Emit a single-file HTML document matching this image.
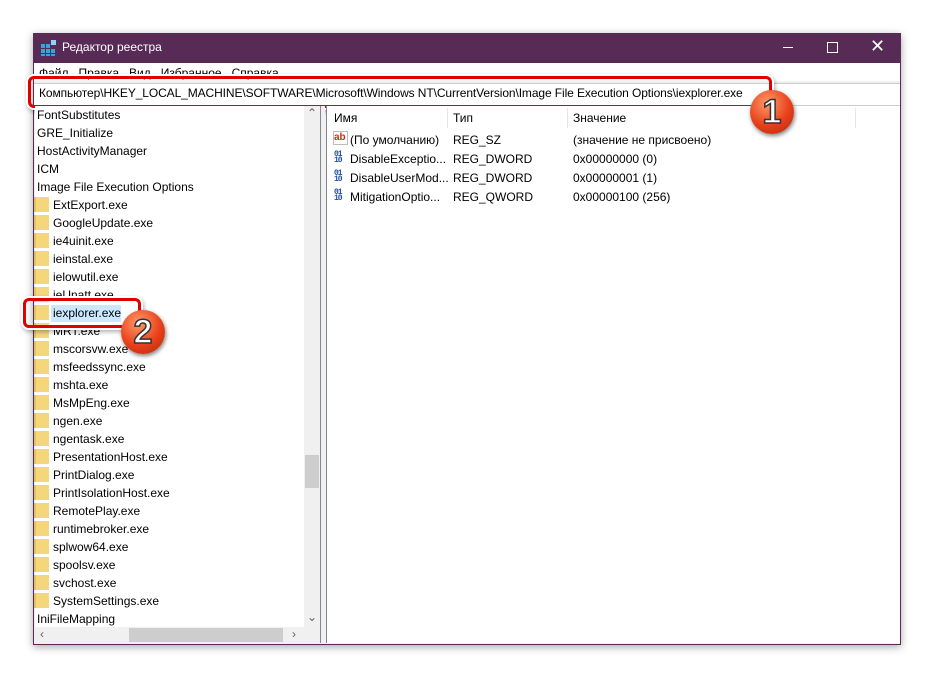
<html><head><style>
body{margin:0;width:934px;height:678px;background:#fff;position:relative;overflow:hidden;font-family:"Liberation Sans",sans-serif;font-size:12px;color:#000}
.a{position:absolute}
.win{left:33px;top:33px;width:868px;height:612px;background:#f0f0f0;box-shadow:0 2px 8px rgba(0,0,0,.35);border:1px solid #582b57;box-sizing:border-box}
.t{white-space:nowrap}
.fold{position:absolute;width:13px;height:15px;background:#f4d77c;border-left:2px solid #e6c35a}
.badge{position:absolute;width:44px;height:44px;border-radius:50%;background:radial-gradient(circle at 40% 30%,#ff9a6a,#e8401a 55%,#b02808);box-shadow:1px 2px 4px rgba(0,0,0,.5);color:#fff;font:bold 34px "Liberation Sans",sans-serif;text-align:center;line-height:44px;-webkit-text-stroke:1.5px #333}
.ri{position:absolute;width:13px;height:13px;font:bold 8px "Liberation Mono",monospace;color:#2050a0;line-height:6px;letter-spacing:-1px}
</style></head><body>
<div class="a win"></div>
<div class="a" style="left:33px;top:33px;width:868px;height:30px;background:#582b57"></div>
<svg class="a" style="left:41px;top:40px" width="16" height="16"><g fill="#3aa0e0"><rect x="0" y="4" width="4" height="4"/><rect x="5" y="4" width="4" height="4"/><rect x="0" y="9" width="4" height="4"/><rect x="5" y="9" width="4" height="4"/><rect x="10" y="9" width="4" height="4"/><rect x="0" y="14" width="4" height="2"/><rect x="5" y="14" width="4" height="2"/><rect x="10" y="14" width="4" height="2"/><rect x="10" y="0" width="5" height="5" fill="#8fd0ff"/></g></svg>
<div class="a t" style="left:62px;top:40px;color:#fff;font-size:12px">Редактор реестра</div>
<div class="a" style="left:783px;top:47px;width:10px;height:1px;background:#fff"></div>
<div class="a" style="left:827px;top:42px;width:9px;height:9px;border:1px solid #fff"></div>
<div class="a t" style="left:870px;top:36px;color:#fff;font-size:18px">✕</div>
<div class="a" style="left:34px;top:63px;width:866px;height:18px;background:#fff"></div>
<div class="a t" style="left:39px;top:66px">Файл &nbsp;&nbsp;Правка &nbsp;&nbsp;Вид &nbsp;&nbsp;Избранное &nbsp;&nbsp;Справка</div>
<div class="a" style="left:34px;top:83px;width:866px;height:21px;background:#fff;border-top:1px solid #ccc;border-bottom:1px solid #ccc"></div>
<div class="a" style="left:28px;top:76px;width:738px;height:26px;border:3px solid #e00000;border-radius:6px;box-shadow:0 0 0 2px #fff,1px 2px 4px 2px rgba(0,0,0,.3)"></div>
<div class="a t" style="left:39px;top:86px;letter-spacing:-0.1px">Компьютер\HKEY_LOCAL_MACHINE\SOFTWARE\Microsoft\Windows NT\CurrentVersion\Image File Execution Options\iexplorer.exe</div>
<!-- left pane -->
<div class="a" style="left:35px;top:106px;width:285px;height:537px;background:#fff;border-right:1px solid #828790"></div>
<div class="a" style="left:304px;top:106px;width:16px;height:521px;background:#f0f0f0"></div>
<div class="a" style="left:305px;top:455px;width:14px;height:33px;background:#cdcdcd"></div>
<div class="a t" style="left:307px;top:106px;color:#606060">⌃</div>
<div class="a t" style="left:307px;top:610px;color:#606060">⌄</div>
<div class="a" style="left:35px;top:627px;width:269px;height:16px;background:#f0f0f0"></div>
<div class="a" style="left:129px;top:628px;width:154px;height:14px;background:#cdcdcd"></div>
<div class="a t" style="left:40px;top:627px;color:#606060">‹</div>
<div class="a t" style="left:292px;top:627px;color:#606060">›</div>
<div class="a" style="left:304px;top:627px;width:16px;height:16px;background:#f0f0f0"></div>
<div class="a" style="left:321px;top:106px;width:4px;height:537px;background:#f0f0f0"></div>
<div id="L"></div>
<!-- right pane -->
<div class="a" style="left:326px;top:106px;width:573px;height:537px;background:#fff;border-left:1px solid #828790"></div>
<div class="a" style="left:447px;top:108px;width:1px;height:20px;background:#e5e5e5"></div>
<div class="a" style="left:567px;top:108px;width:1px;height:20px;background:#e5e5e5"></div>
<div class="a" style="left:855px;top:108px;width:1px;height:20px;background:#e5e5e5"></div>
<div class="a t" style="left:334px;top:111px">Имя</div>
<div class="a t" style="left:453px;top:111px">Тип</div>
<div class="a t" style="left:573px;top:111px">Значение</div>
<div class="a t" style="left:333px;top:131px;font:bold 10px 'Liberation Sans';color:#c03010;border:1px solid #bbb;width:13px;height:12px;line-height:11px">ab</div>
<div class="ri" style="left:334px;top:152px">01<br>10</div>
<div class="ri" style="left:334px;top:171px">01<br>10</div>
<div class="ri" style="left:334px;top:190px">01<br>10</div>
<div class="a t" style="left:350px;top:131px;line-height:19px">(По умолчанию)<br>DisableExceptio...<br>DisableUserMod...<br>MitigationOptio...</div>
<div class="a t" style="left:453px;top:131px;line-height:19px">REG_SZ<br>REG_DWORD<br>REG_DWORD<br>REG_QWORD</div>
<div class="a t" style="left:573px;top:131px;line-height:19px">(значение не присвоено)<br>0x00000000 (0)<br>0x00000001 (1)<br>0x00000100 (256)</div>
<div class="a" style="left:23px;top:298px;width:112px;height:24px;border:3px solid #e00000;border-radius:6px;box-shadow:0 0 0 2px #fff,1px 2px 4px 2px rgba(0,0,0,.3)"></div>
<div class="badge" style="left:750px;top:90px">1</div>
<div class="badge" style="left:121px;top:310px">2</div>
<script>
var tops=["FontSubstitutes","GRE_Initialize","HostActivityManager","ICM","Image File Execution Options"];
var subs=["ExtExport.exe","GoogleUpdate.exe","ie4uinit.exe","ieinstal.exe","ielowutil.exe","ieUnatt.exe","iexplorer.exe","MRT.exe","mscorsvw.exe","msfeedssync.exe","mshta.exe","MsMpEng.exe","ngen.exe","ngentask.exe","PresentationHost.exe","PrintDialog.exe","PrintIsolationHost.exe","RemotePlay.exe","runtimebroker.exe","splwow64.exe","spoolsv.exe","svchost.exe","SystemSettings.exe"];
var hh="",yy=108;
tops.forEach(function(s){hh+='<div class="a t" style="left:37px;top:'+yy+'px">'+s+'</div>';yy+=18;});
subs.forEach(function(s){
 if(s=="iexplorer.exe")hh+='<div class="a" style="left:51px;top:'+(yy-1)+'px;width:70px;height:17px;background:#cce8ff"></div>';
 hh+='<div class="fold" style="left:34px;top:'+(yy-1)+'px"></div><div class="a t" style="left:53px;top:'+yy+'px">'+s+'</div>';yy+=18;});
hh+='<div class="a t" style="left:37px;top:'+yy+'px">IniFileMapping</div>';
document.getElementById("L").outerHTML=hh;
</script>
</body></html>
